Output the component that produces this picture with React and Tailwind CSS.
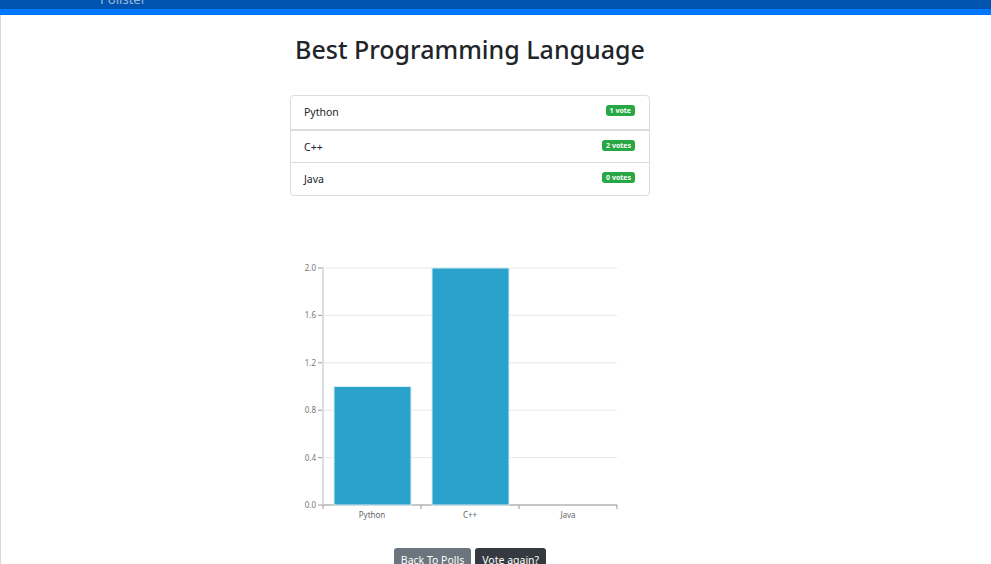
const options = [
  { name: "Python", votes: 1 },
  { name: "C++", votes: 2 },
  { name: "Java", votes: 0 },
];

function VoteChart({ data }) {
  const left = 33;
  const right = 327;
  const top = 12;
  const bottom = 249;
  const max = 2;
  const band = (right - left) / data.length;
  const ticks = [0, 0.4, 0.8, 1.2, 1.6, 2.0];
  const y = (v) => bottom - (v / max) * (bottom - top);

  return (
    <svg width="360" height="272" viewBox="0 0 360 272" className="block">
      {ticks.map((t) => (
        <g key={t}>
          <line x1={left} x2={right} y1={y(t)} y2={y(t)} stroke="#e8e8e8" strokeWidth="1" />
          <line x1={left - 5} x2={left} y1={y(t)} y2={y(t)} stroke="#999" strokeWidth="1" />
          <text x={left - 7} y={y(t) + 3} textAnchor="end" fontSize="8" fill="#777">
            {t.toFixed(1)}
          </text>
        </g>
      ))}
      <line x1={left} x2={left} y1={top} y2={bottom} stroke="#ddd" strokeWidth="2" />
      <line x1={left} x2={right} y1={bottom} y2={bottom} stroke="#999" strokeWidth="1" />
      {[0, 1, 2, 3].map((i) => (
        <line
          key={i}
          x1={left + i * band}
          x2={left + i * band}
          y1={bottom}
          y2={bottom + 4}
          stroke="#999"
          strokeWidth="1"
        />
      ))}
      {data.map((d, i) => {
        const x = left + i * band + 11;
        const w = band - 21;
        return (
          <g key={d.name}>
            {d.votes > 0 && (
              <rect
                x={x}
                y={y(d.votes)}
                width={w}
                height={bottom - y(d.votes)}
                fill="#2aa2cb"
                stroke="#d6eef6"
                strokeWidth="1"
              />
            )}
            <text x={left + i * band + band / 2} y={bottom + 13} textAnchor="middle" fontSize="8" fill="#666">
              {d.name}
            </text>
          </g>
        );
      })}
    </svg>
  );
}

export default function App() {
  return (
    <div
      className="min-h-[564px] overflow-hidden bg-white text-[#212529]"
      style={{ fontFamily: '"Noto Sans", "Open Sans", Arial, sans-serif' }}
    >
      <div className="h-[9px] overflow-hidden bg-[#0054b0]">
        <div className="ml-[100px] -mt-[8px] text-[13px] leading-[14px] text-[#9cb8d8]">Pollster</div>
      </div>
      <div className="h-[6px] bg-[#0077ff]" />

      <div className="min-h-[549px] border-l border-[#d8d8d8]">
        <div className="ml-[289px] flex w-[360px] flex-col items-center">
          <h1 className="mt-[18px] text-[25px] font-medium leading-[32px] whitespace-nowrap">
            Best Programming Language
          </h1>

          <ul className="mt-[30px] w-full rounded border border-[#dcdcdc]">
            {options.map((o, i) => (
              <li
                key={o.name}
                className={
                  "flex h-[33px] items-start justify-between pl-[13px] pr-[14px] " +
                  (i === 1 ? "border-t-2 border-[#dcdcdc]" : i === 2 ? "border-t border-[#dcdcdc]" : "")
                }
              >
                <span className="mt-[9px] text-[10.5px] leading-[14px]">{o.name}</span>
                <span className="mt-[9px] rounded-[3px] bg-[#28a745] px-[4px] text-[7px] font-bold leading-[11px] text-white">
                  {o.votes} {o.votes === 1 ? "vote" : "votes"}
                </span>
              </li>
            ))}
          </ul>

          <div className="mt-[60px]">
            <VoteChart data={options} />
          </div>

          <div className="mt-[20px] flex gap-[4px]">
            <button className="rounded-[3px] bg-[#6c757d] px-[7px] pt-[5px] pb-[6px] text-[10.5px] leading-[14px] text-white">
              Back To Polls
            </button>
            <button className="rounded-[3px] bg-[#343a40] px-[7px] pt-[5px] pb-[6px] text-[10.5px] leading-[14px] text-white">
              Vote again?
            </button>
          </div>
        </div>
      </div>
    </div>
  );
}
